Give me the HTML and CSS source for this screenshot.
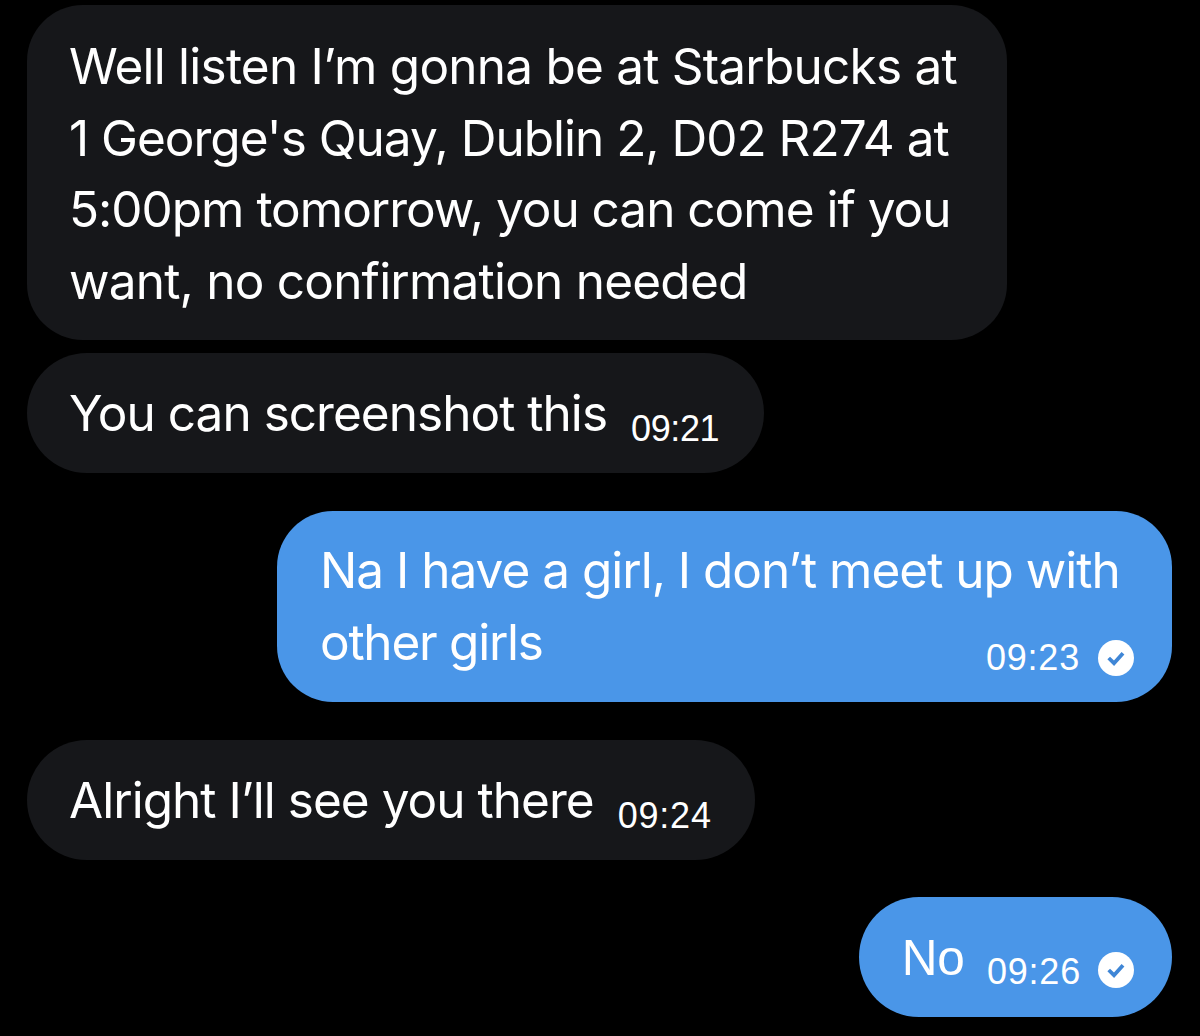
FILE: index.html
```html
<!DOCTYPE html>
<html lang="en">
<head>
<meta charset="utf-8">
<title>Messages</title>
<link rel="stylesheet" href="styles.css">
</head>
<body>
<main class="chat">
  <div class="group">
    <div class="bubble in multi">
      <p class="line wide">Well listen I’m gonna be at Starbucks at</p>
      <p class="line">1 George's Quay, Dublin 2, D02 R274 at</p>
      <p class="line">5:00pm tomorrow, you can come if you</p>
      <p class="line wide">want, no confirmation needed</p>
    </div>
    <div class="bubble in single first-single">
      <span class="text">You can screenshot this</span>
      <span class="time narrow">09:21</span>
    </div>
  </div>
  <div class="bubble out multi-out">
    <p class="line">Na I have a girl, I don’t meet up with</p>
    <div class="last">
      <span class="line tight">other girls</span>
      <span class="meta">
        <span class="time">09:23</span>
        <svg class="tick" viewBox="0 0 36 36"><circle cx="18" cy="18" r="18" fill="#fff"/><path d="M10.7 18l5.3 5.2 9-10" fill="none" stroke="#3f86d6" stroke-width="3.8"/></svg>
      </span>
    </div>
  </div>
  <div class="bubble in single second-single">
    <span class="text">Alright I’ll see you there</span>
    <span class="time">09:24</span>
  </div>
  <div class="bubble out single final">
    <span class="text no">No</span>
    <span class="meta">
      <span class="time">09:26</span>
      <svg class="tick" viewBox="0 0 36 36"><circle cx="18" cy="18" r="18" fill="#fff"/><path d="M10.7 18l5.3 5.2 9-10" fill="none" stroke="#3f86d6" stroke-width="3.8"/></svg>
    </span>
  </div>
</main>
</body>
</html>
```
FILE: styles.css
```css
* { box-sizing: border-box; }
html, body { margin: 0; padding: 0; background: #000; }
body { width: 1200px; height: 1036px; overflow: hidden; font-family: Inter, "Liberation Sans", sans-serif; color: #fff; }
.chat { display: flex; flex-direction: column; padding: 5px 28px 0 27px; gap: 38px; }
.group { display: flex; flex-direction: column; align-items: flex-start; gap: 13px; }
.bubble { border-radius: 60px; }
.in { background: #16171a; align-self: flex-start; }
.out { background: #4a96e8; align-self: flex-end; }
.line { margin: 0; font-size: 49.5px; line-height: 71.5px; letter-spacing: -1px; white-space: nowrap; }
.wide { letter-spacing: -0.78px; }
.tight { letter-spacing: -1.25px; }
.multi { width: 980px; height: 335px; padding: 26px 0 0 42px; border-radius: 56px; }
.multi-out { width: 895px; height: 191px; padding: 24px 38px 0 43px; border-radius: 56px; }
.single { display: flex; align-items: center; height: 120px; padding: 0 43px 0 42px; }
.first-single { padding-right: 45px; }
.text { font-size: 49.5px; letter-spacing: -0.97px; white-space: nowrap; margin-top: -1px; }
.time { font-family: "Liberation Sans", Arial, sans-serif; font-size: 36px; letter-spacing: 0.8px; white-space: nowrap; margin-left: 24px; margin-top: 32px; }
.narrow { letter-spacing: -0.4px; }
.last { display: flex; justify-content: space-between; align-items: center; }
.meta { display: flex; align-items: center; gap: 18px; }
.meta .time { margin: 0; }
.last .meta { margin-top: 30px; }
.single .meta { margin-left: 22px; margin-top: 28px; gap: 17px; }
.single .meta .time { margin-top: 2px; }
.single .meta .tick { margin-bottom: 2px; }
.tick { width: 36px; height: 36px; display: block; }
.final { margin-top: -1px; padding-left: 43px; padding-right: 38px; }
.no { font-family: "Liberation Sans", Arial, sans-serif; font-size: 49.5px; letter-spacing: 0; margin-top: 1px; }
```
